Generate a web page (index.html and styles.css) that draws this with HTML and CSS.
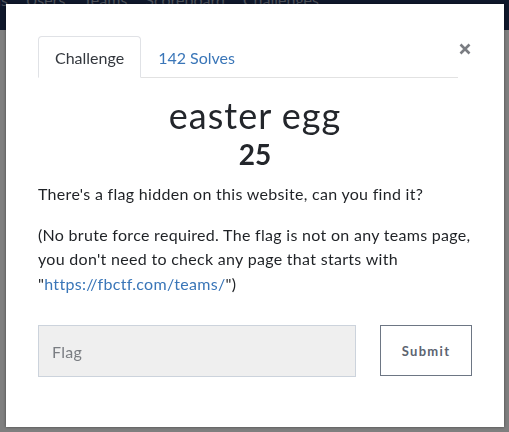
FILE: index.html
```html
<!DOCTYPE html>
<html>
<head>
<meta charset="utf-8">
<link rel="stylesheet" href="styles.css">
</head>
<body>
<header class="nav">
  <span>ns</span><span>Users</span><span>Teams</span><span>Scoreboard</span><span>Challenges</span>
</header>
<main class="board">
  <div class="tile"><span>25</span></div>
  <div class="tile"><span>100</span></div>
</main>
<div class="backdrop"></div>
<div class="modal">
  <div class="modal-head">
    <ul class="tabs">
      <li class="tab active">Challenge</li>
      <li class="tab">142 Solves</li>
    </ul>
    <button class="close" aria-label="Close">
      <svg width="12" height="12" viewBox="0 0 12 12"><path d="M1.5 1.5 L10.5 10.5 M10.5 1.5 L1.5 10.5" stroke="#7a7d82" stroke-width="2.6" stroke-linecap="butt"/></svg>
    </button>
  </div>
  <h1 class="title">easter egg</h1>
  <div class="points">25</div>
  <p class="desc">There's a flag hidden on this website, can you find it?</p>
  <p class="desc">(No brute force required. The flag is not on any teams page, you don't need to check any page that starts with "<a href="#">https://fbctf.com/teams/</a>")</p>
  <form class="flag-form">
    <input class="flag-input" type="text" placeholder="Flag">
    <button class="submit" type="button">Submit</button>
  </form>
</div>
</body>
</html>
```
FILE: styles.css
```css
html, body {
  margin: 0;
  padding: 0;
  height: 100%;
  overflow: hidden;
}
body {
  background: #ffffff;
  font-family: "Lato", "Liberation Sans", sans-serif;
}
.nav {
  height: 30px;
  background: #1f3057;
  display: flex;
  gap: 18px;
  margin-left: -8px;
  align-items: flex-start;
  color: #9aa3b5;
  font-size: 16px;
  line-height: 10px;
  overflow: hidden;
}
.nav span { display: block; margin-top: -5px; }
.board {
  display: flex;
  gap: 30px;
  padding: 367px 0 0 8px;
  background: #ffffff;
}
.tile {
  width: 232px;
  height: 5px;
  overflow: hidden;
  background: #1f3057;
  color: #9aa3b5;
  display: flex;
  justify-content: center;
  font-size: 16px;
  line-height: 16px;
}
.tile span { margin-top: 1px; margin-left: 30px; }
.backdrop {
  position: fixed;
  inset: 0;
  background: rgba(0, 0, 0, 0.5);
}
.modal {
  position: fixed;
  left: 6px;
  top: 4px;
  width: 498px;
  height: 423px;
  box-sizing: border-box;
  background: #ffffff;
  padding: 32px 32px 0 32px;
  box-shadow: 0 0 3px rgba(0, 0, 0, 0.45);
  color: #25272b;
}
.modal-head {
  display: flex;
  align-items: flex-start;
}
.tabs {
  flex: 1;
  display: flex;
  list-style: none;
  margin: 0;
  padding: 0;
  border-bottom: 1px solid #e2e2e2;
}
.tab {
  font-size: 16px;
  line-height: 20px;
  padding: 11px 16px 9px 16px;
  margin-bottom: -1px;
  border: 1px solid transparent;
  border-radius: 4px 4px 0 0;
  color: #3a76b8;
}
.tab.active {
  color: #33373d;
  border-color: #e0e2e6;
  border-bottom-color: #ffffff;
  background: #ffffff;
}
.close {
  border: 0;
  background: none;
  padding: 0;
  margin: 7px 0 0 1px;
  width: 13px;
  height: 12px;
  display: flex;
  cursor: pointer;
}
.title {
  margin: 17px 0 0 0;
  text-align: center;
  font-weight: 400;
  font-size: 36px;
  line-height: 40px;
  letter-spacing: 1px;
  color: #23262b;
}
.points {
  text-align: center;
  font-size: 28px;
  font-weight: 700;
  line-height: 32px;
  margin-top: 3px;
  color: #23262b;
}
.desc {
  margin: 12px 0 0 0;
  font-size: 16px;
  line-height: 24.5px;
  letter-spacing: 0.3px;
  color: #1f2226;
}
.desc + .desc { margin-top: 16px; }
.desc a {
  color: #3a76b8;
  text-decoration: none;
}
.flag-form {
  display: flex;
  align-items: flex-start;
  justify-content: space-between;
  margin-top: 29px;
}
.flag-input {
  width: 318px;
  height: 52px;
  box-sizing: border-box;
  background: #efefef;
  border: 1px solid #ccd3dc;
  padding: 0 13px;
  font-family: "Lato", "Liberation Sans", sans-serif;
  font-size: 16px;
  letter-spacing: 0.3px;
  color: #333;
  outline: none;
}
.flag-input::placeholder { color: #7a7d82; }
.submit {
  width: 92px;
  height: 51px;
  box-sizing: border-box;
  background: #ffffff;
  border: 1px solid #6d7684;
  font-family: "Lato", "Liberation Sans", sans-serif;
  font-weight: 700;
  font-size: 13px;
  letter-spacing: 1.3px;
  color: #5c6470;
  padding: 0;
}
```
